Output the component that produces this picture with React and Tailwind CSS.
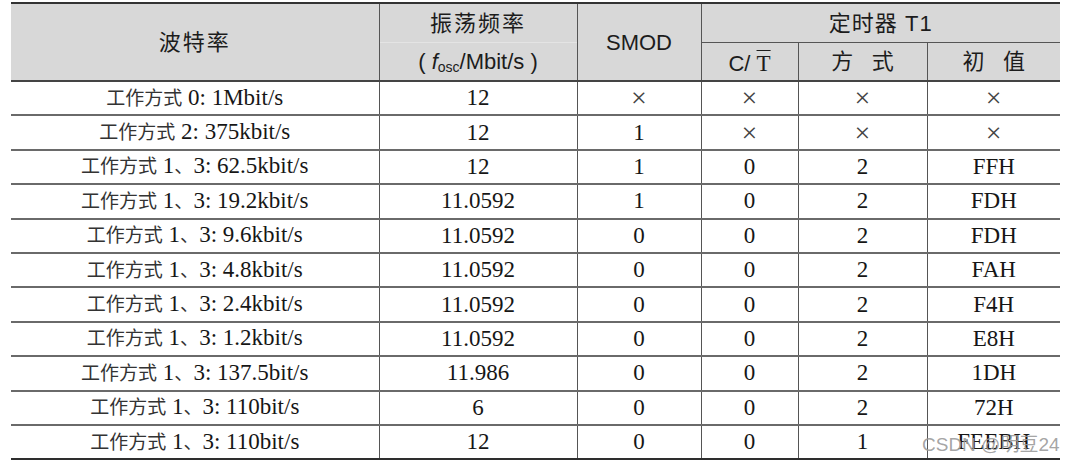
const serif = "font-['Liberation_Serif','Noto_Sans_CJK_SC',serif]";
const sans = "font-['Liberation_Sans','Noto_Sans_CJK_SC',sans-serif]";

const rows = [
  ["工作方式 0: 1Mbit/s", "12", "×", "×", "×", "×"],
  ["工作方式 2: 375kbit/s", "12", "1", "×", "×", "×"],
  ["工作方式 1、3: 62.5kbit/s", "12", "1", "0", "2", "FFH"],
  ["工作方式 1、3: 19.2kbit/s", "11.0592", "1", "0", "2", "FDH"],
  ["工作方式 1、3: 9.6kbit/s", "11.0592", "0", "0", "2", "FDH"],
  ["工作方式 1、3: 4.8kbit/s", "11.0592", "0", "0", "2", "FAH"],
  ["工作方式 1、3: 2.4kbit/s", "11.0592", "0", "0", "2", "F4H"],
  ["工作方式 1、3: 1.2kbit/s", "11.0592", "0", "0", "2", "E8H"],
  ["工作方式 1、3: 137.5bit/s", "11.986", "0", "0", "2", "1DH"],
  ["工作方式 1、3: 110bit/s", "6", "0", "0", "2", "72H"],
  ["工作方式 1、3: 110bit/s", "12", "0", "0", "1", "FEEBH"],
];

// split a label into CJK and latin runs so the CJK can be set a bit smaller and lighter
function Label({ text }) {
  const parts = text.split(/([\u3000-\u9fff]+)/).filter(Boolean);
  return (
    <>
      {parts.map((p, i) =>
        /[\u3000-\u9fff]/.test(p) ? (
          <span key={i} className="text-[19px] text-[#333]">
            {p}
          </span>
        ) : (
          <span key={i}>{p}</span>
        )
      )}
    </>
  );
}

function Cell({ children, last, bottom }) {
  return (
    <td
      className={`h-[34.4px] p-0 text-center align-middle ${
        last ? "" : "border-r border-r-[#555]"
      } border-b-2 ${bottom ? "border-b-[#2e2e2e]" : "border-b-[#6a6a6a]"}`}
    >
      {children}
    </td>
  );
}

export default function App() {
  const head = `bg-[#d8d8d8] p-0 text-center align-middle text-[22px] font-normal text-[#1c1c1c] ${sans}`;

  return (
    <div className="relative w-[1070px] h-[463px] overflow-hidden bg-white pt-[2px] pl-[11px]">
      <table className="w-[1049px] table-fixed border-collapse">
        <colgroup>
          <col className="w-[368px]" />
          <col className="w-[198px]" />
          <col className="w-[124px]" />
          <col className="w-[97px]" />
          <col className="w-[129px]" />
          <col className="w-[133px]" />
        </colgroup>
        <thead>
          <tr>
            <th
              rowSpan={2}
              className={`${head} border-t-2 border-t-[#333] border-b-2 border-b-[#444] border-r border-r-[#555] tracking-[2px]`}
            >
              波特率
            </th>
            <th
              rowSpan={2}
              className={`${head} border-t-2 border-t-[#333] border-b-2 border-b-[#444] border-r border-r-[#555]`}
            >
              <div className="flex h-[76px] flex-col">
                <div className="flex h-[39px] items-center justify-center border-b border-b-[#e4e4e4] tracking-[2px]">
                  振荡频率
                </div>
                <div className="flex flex-1 items-center justify-center">
                  (&nbsp;
                  <span className="italic">f</span>
                  <span className="text-[14px] leading-none translate-y-[5px]">osc</span>
                  /Mbit/s&nbsp;)
                </div>
              </div>
            </th>
            <th
              rowSpan={2}
              className={`${head} border-t-2 border-t-[#333] border-b-2 border-b-[#444] border-r border-r-[#555]`}
            >
              SMOD
            </th>
            <th
              colSpan={3}
              className={`${head} h-[38px] border-t-2 border-t-[#333] border-b border-b-[#555] tracking-[1px]`}
            >
              定时器 T1
            </th>
          </tr>
          <tr>
            <th className={`${head} h-[37px] border-b-2 border-b-[#444] border-r border-r-[#555]`}>
              <span className="relative top-[3px]">
                C/&nbsp;
                <span className={`${serif} text-[23px] overline decoration-1`}>T</span>
              </span>
            </th>
            <th className={`${head} border-b-2 border-b-[#444] border-r border-r-[#555]`}>
              方&nbsp;&nbsp;&nbsp;式
            </th>
            <th className={`${head} border-b-2 border-b-[#444]`}>初&nbsp;&nbsp;&nbsp;值</th>
          </tr>
        </thead>
        <tbody className={`${serif} text-[23px] leading-[24px] text-[#161616]`}>
          {rows.map((r, i) => {
            const bottom = i === rows.length - 1;
            return (
              <tr key={i}>
                <Cell bottom={bottom}>
                  <Label text={r[0]} />
                </Cell>
                {r.slice(1).map((v, j) => (
                  <Cell key={j} bottom={bottom} last={j === 4}>
                    {v === "×" ? (
                      <span className="text-[28px] leading-none text-[#444]">×</span>
                    ) : (
                      v
                    )}
                  </Cell>
                ))}
              </tr>
            );
          })}
        </tbody>
      </table>

      {/* csdn watermark over the last cell */}
      <div
        className={`absolute left-[922px] top-[431px] whitespace-nowrap text-[19px] text-[#9a9a9a]/90 ${sans}`}
      >
        CSDN @明豆24
      </div>
    </div>
  );
}
